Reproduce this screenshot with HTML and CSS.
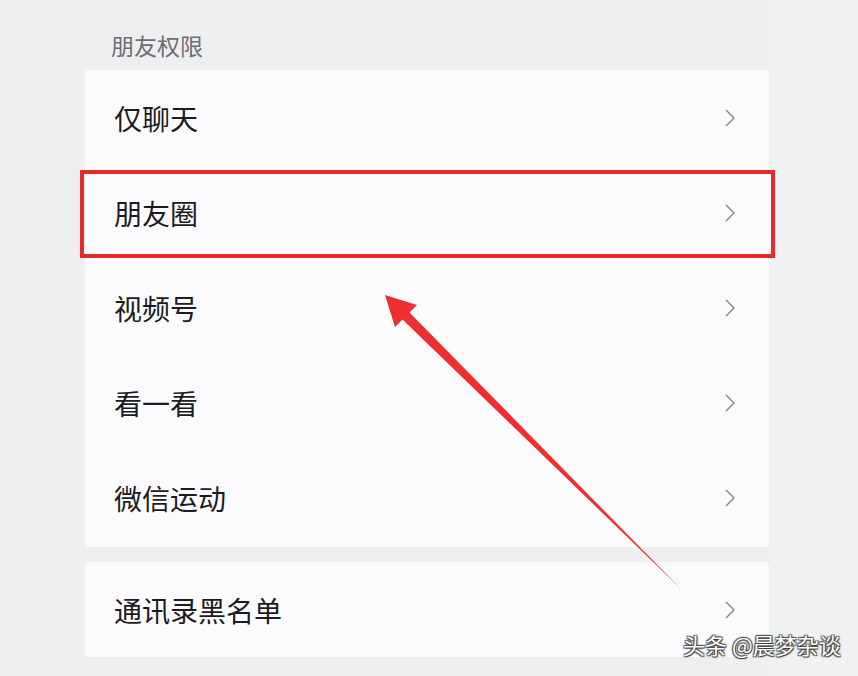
FILE: index.html
```html
<!DOCTYPE html>
<html lang="zh-CN">
<head>
    <meta charset="UTF-8">
    <meta name="viewport" content="width=device-width, initial-scale=1.0">
    <title>朋友权限</title>
    <link rel="stylesheet" href="styles.css">
</head>
<body>
    <div class="page">
        <div class="section-title">朋友权限</div>
        <div class="card">
            <div class="row"><span>仅聊天</span><svg class="chev" viewBox="0 0 10 18"><polyline points="1,1 9,9 1,17"/></svg></div>
            <div class="row marked"><span>朋友圈</span><svg class="chev" viewBox="0 0 10 18"><polyline points="1,1 9,9 1,17"/></svg></div>
            <div class="row"><span>视频号</span><svg class="chev" viewBox="0 0 10 18"><polyline points="1,1 9,9 1,17"/></svg></div>
            <div class="row"><span>看一看</span><svg class="chev" viewBox="0 0 10 18"><polyline points="1,1 9,9 1,17"/></svg></div>
            <div class="row"><span>微信运动</span><svg class="chev" viewBox="0 0 10 18"><polyline points="1,1 9,9 1,17"/></svg></div>
        </div>
        <div class="card second">
            <div class="row"><span>通讯录黑名单</span><svg class="chev" viewBox="0 0 10 18"><polyline points="1,1 9,9 1,17"/></svg></div>
        </div>
    </div>

    <!-- red arrow drawn over the screenshot -->
    <svg class="arrow" viewBox="0 0 858 676" width="858" height="676">
        <polygon points="385,295 417,305 409.5,312.5 681,589 402.5,319.5 395,327"/>
    </svg>

    <div class="watermark">头条 @晨梦杂谈</div>
</body>
</html>
```

FILE: styles.css
```css
body {
    margin: 0;
    padding: 0;
    background-color: #eeeff1;
    font-family: "Noto Sans CJK SC", "Noto Sans", sans-serif;
    width: 858px;
    height: 676px;
    overflow: hidden;
    position: relative;
}
.page {
    padding-left: 85px;
    width: 684px;
    height: 676px;
    border-right: 89px solid #f0f1f3;
}
.section-title {
    height: 70px;
    box-sizing: border-box;
    padding: 30px 0 0 26px;
    font-size: 23px;
    line-height: 30px;
    color: #6e6e73;
}
.card {
    background-color: #fbfbfd;
    border-radius: 4px;
    padding-bottom: 2px;
}
.card.second {
    margin-top: 15px;
    padding-bottom: 0;
}
.row {
    height: 95px;
    display: flex;
    align-items: center;
    justify-content: space-between;
    padding: 0 34px 0 29px;
    font-size: 28px;
    color: #1c1b22;
    position: relative;
}
.row span {
    line-height: 1;
}
.chev {
    width: 10px;
    height: 18px;
}
.chev polyline {
    fill: none;
    stroke: #8a8a8e;
    stroke-width: 1.5;
}
.row.marked::after {
    content: "";
    position: absolute;
    left: -5px;
    right: -6px;
    top: 5px;
    bottom: 2px;
    border: 4px solid #e52a2c;
}
.arrow {
    position: absolute;
    top: 0;
    left: 0;
    pointer-events: none;
}
.arrow polygon {
    fill: #ef2f2f;
}
.watermark {
    position: absolute;
    left: 683px;
    top: 629px;
    font-size: 22px;
    line-height: 30px;
    color: #ffffff;
    text-shadow: 1px 1px 1px #3a3a3a, -1px -1px 1px #555, 1px -1px 1px #555, -1px 1px 1px #555;
}
```
